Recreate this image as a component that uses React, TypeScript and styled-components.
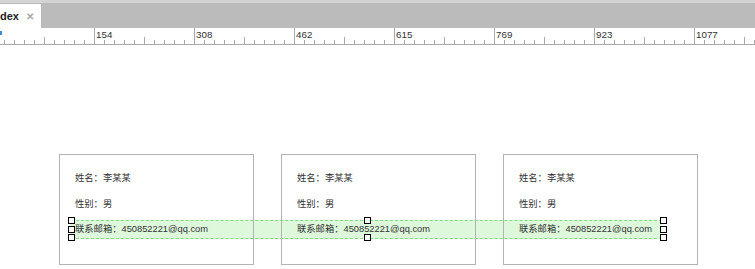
import React from "react"
import styled, { createGlobalStyle } from "styled-components"

const GlobalStyle = createGlobalStyle`
  html, body {
    margin: 0;
    padding: 0;
    background: #fff;
    font-family: "Liberation Sans", Arial, "Noto Sans CJK SC", sans-serif;
  }
`

const Page = styled.div`
  width: 755px;
  height: 269px;
  overflow: hidden;
`

const TabBar = styled.div`
  height: 28px;
  background: #bbbbbb;
  border-top: 3px solid #d3d3d3;
  box-sizing: border-box;
  display: flex;
  align-items: flex-end;
`

const Tab = styled.div`
  width: 41px;
  height: 24px;
  background: #fff;
  display: flex;
  align-items: center;
  gap: 7px;
  font-size: 11px;
  font-weight: bold;
  color: #222;
`

const Close = styled.span`
  color: #a8a8a8;
  font-size: 10px;
`

const RulerBox = styled.div`
  height: 16px;
  border-bottom: 1px solid #a9a9a9;
`

const Canvas = styled.div`
  position: relative;
  padding: 109px 0 0 59px;
`

const Cards = styled.div`
  position: relative;
  z-index: 1;
  display: flex;
  gap: 27px;
`

const Card = styled.div`
  width: 195px;
  height: 111px;
  box-sizing: border-box;
  border: 1px solid #b3b3b3;
  padding: 18px 0 0 15px;
  display: flex;
  flex-direction: column;
  gap: 15.5px;
  font-size: 9.3px;
  color: #333;
`

const Line = styled.div`
  height: 10px;
  line-height: 10px;
  white-space: nowrap;
`

/* selection overlay drawn by the editor over the email row */
const Selection = styled.div`
  position: absolute;
  left: 68px;
  top: 172px;
  width: 599px;
  height: 24px;
  display: flex;
  justify-content: space-between;
`

const Band = styled.div`
  position: absolute;
  left: 3px;
  right: 5px;
  top: 3px;
  height: 17px;
  z-index: 0;
  background: rgba(200, 244, 196, 0.6);
  border-top: 1px dashed #86d986;
  border-bottom: 1px dashed #86d986;
`

const HandleColumn = styled.div`
  position: relative;
  z-index: 2;
  display: flex;
  flex-direction: column;
  justify-content: space-between;
  height: 24px;
`

const Handle = styled.div`
  width: 5px;
  height: 5px;
  border: 1px solid #000;
  background: #fff;
`

const Ruler = () => {
  const ticks: React.ReactNode[] = []
  const labels = ["154", "308", "462", "615", "769", "923", "1077"]
  for (let x = 4; x < 755; x += 10) {
    const rel = (x - 94) % 100
    const y1 = rel === 0 ? 0 : Math.abs(rel) === 50 ? 9 : 12
    ticks.push(<line key={x} x1={x + 0.5} y1={y1} x2={x + 0.5} y2={16} stroke="#aaa" />)
  }
  return (
    <RulerBox>
      <svg width="755" height="16" style={{ display: "block" }}>
        <rect x={0} y={3} width={2} height={4} fill="#3c8dd8" />
        {ticks}
        {labels.map((l, i) => (
          <text
            key={l}
            x={96 + i * 100}
            y={10}
            fontSize="9.8"
            fill="#333"
            fontFamily="Liberation Sans, Arial, sans-serif"
          >
            {l}
          </text>
        ))}
      </svg>
    </RulerBox>
  )
}

const people = [0, 1, 2]

const App: React.FC = () => {
  return (
    <Page>
      <GlobalStyle />
      <TabBar>
        <Tab>
          <span>dex</span>
          <Close>✕</Close>
        </Tab>
      </TabBar>
      <Ruler />
      <Canvas>
        <Cards>
          {people.map((i) => (
            <Card key={i}>
              <Line>姓名：李某某</Line>
              <Line>性别：男</Line>
              <Line>联系邮箱：450852221@qq.com</Line>
            </Card>
          ))}
        </Cards>
        <Selection>
          <Band />
          <HandleColumn>
            <Handle />
            <Handle />
            <Handle />
          </HandleColumn>
          <HandleColumn>
            <Handle />
            <Handle />
          </HandleColumn>
          <HandleColumn>
            <Handle />
            <Handle />
            <Handle />
          </HandleColumn>
        </Selection>
      </Canvas>
    </Page>
  )
}

export default App
